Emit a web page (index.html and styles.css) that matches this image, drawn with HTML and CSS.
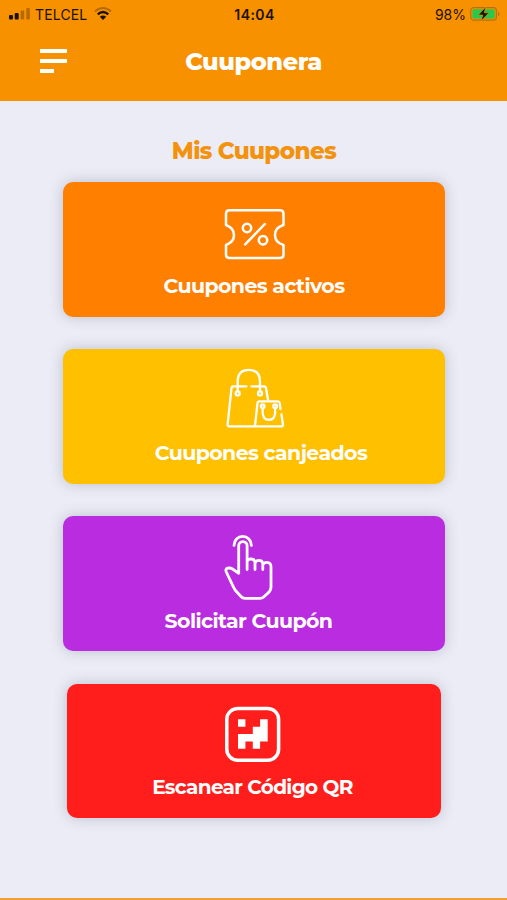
FILE: index.html
```html
<!DOCTYPE html>
<html lang="es">
<head>
    <meta charset="UTF-8">
    <meta name="viewport" content="width=device-width, initial-scale=1.0">
    <title>Cuuponera</title>
    <link rel="stylesheet" href="styles.css">
</head>
<body>
    <header class="header">
        <div class="status-bar">
            <div class="status-left">
                <svg class="signal" width="22" height="14" viewBox="0 0 22 14">
                    <rect x="0" y="8" width="4" height="4.5" rx="1"/>
                    <rect x="5.7" y="6" width="4" height="6.5" rx="1"/>
                    <rect class="dim" x="11.7" y="3.5" width="3.5" height="9" rx="1"/>
                    <rect class="dim" x="17.3" y="1" width="3.5" height="11.5" rx="1"/>
                </svg>
                <span class="carrier">TELCEL</span>
                <svg class="wifi" width="18" height="14" viewBox="0 0 18 14">
                    <path class="dim" d="M1 4.5Q9-2.5 17 4.5" fill="none" stroke="#1c1200" stroke-width="1.8"/>
                    <path d="M3.7 7.3Q9 2.7 14.3 7.3" fill="none" stroke="#1c1200" stroke-width="2.4"/>
                    <path d="M5.8 9.8Q9 7.2 12.2 9.8L9 13z"/>
                </svg>
            </div>
            <span class="time">14:04</span>
            <div class="status-right">
                <span class="percent">98%</span>
                <svg class="battery" width="30" height="16" viewBox="0 0 30 16">
                    <rect x=".8" y="1.6" width="25.6" height="12.6" rx="3" fill="none" stroke="#b57113" stroke-width="1.2"/>
                    <rect x="2.4" y="3.2" width="22.4" height="9.4" rx="1.6" fill="#27c84b"/>
                    <path d="M28 6v4q1.6-.7 1.6-2T28 6z" fill="#b57113"/>
                    <path d="M15.6 1L8.4 9h4.4l-1.6 6 7.6-8.2h-4.5z" stroke="#f89100" stroke-width=".6"/>
                </svg>
            </div>
        </div>
        <div class="nav-bar">
            <div class="menu">
                <span></span>
                <span></span>
                <span class="short"></span>
            </div>
            <h1>Cuuponera</h1>
        </div>
    </header>

    <main class="content">
        <h2>Mis Cuupones</h2>

        <a class="card activos">
            <svg class="icon" viewBox="0 0 80 76">
                <path d="M15.5 14.2H66Q69.5 14.2 69.5 17.7V29Q61 31.5 61 39T69.5 49V58.5Q69.5 62 66 62H15.5Q12 62 12 58.5V49Q20 46 20 39T12 29V17.7Q12 14.2 15.5 14.2Z"/>
                <circle cx="33" cy="32" r="4.2"/>
                <circle cx="49" cy="44.2" r="4.2"/>
                <path d="M50.8 28L31.2 48.4"/>
            </svg>
            <span class="label">Cuupones activos</span>
        </a>

        <a class="card canjeados">
            <svg class="icon bags" viewBox="0 0 80 76">
                <path d="M32.5 23.3H19.5Q17.7 23.3 17.5 25.2L13.6 61.5Q13.5 63.3 15.2 63.3H67.5Q69 63.3 69 61.8L67.5 51.5M37.5 23.3H50Q51.7 23.3 52 25L54 36.5"/>
                <path d="M23.7 28V18.5Q23.7 6.9 34.8 6.9T46 18.5V28"/>
                <path d="M41 62.8L43.5 40Q43.7 38.3 45.4 38.3H63.8Q65.4 38.3 65.7 40L66.4 46"/>
                <path d="M48.7 45V50Q49 56.8 54.9 56.8T61.1 50V45"/>
                <circle cx="23.7" cy="30.4" r="2"/>
                <circle cx="46" cy="30.4" r="2"/>
                <circle cx="48.7" cy="43.2" r="1.8"/>
                <circle cx="61.1" cy="43.2" r="1.8"/>
            </svg>
            <span class="label">Cuupones canjeados</span>
        </a>

        <a class="card solicitar">
            <svg class="icon hand" viewBox="0 0 80 76">
                <path d="M20 15.4A8.7 9 0 0 1 37.4 15.4"/>
                <path d="M24.7 43.3V15.8A4.2 4.2 0 0 1 33.1 15.8V39.5M33.1 31.5Q33.8 29 37 29Q41 29 41 33V39.5M41 33.5Q41.7 30.3 44.8 30.3Q48.8 30.3 48.8 34.3V39.5M48.8 35Q49.5 32.3 52.8 32.3Q57 32.3 57 37V57Q57 61 53.5 63.5L49.7 67Q48.2 68.3 46 68.3H31Q28.5 68.3 27 66.5L21.5 60.5Q20.3 59 19.6 57.3L12.3 42Q11 39 13.7 38.2Q16.2 37.5 18.5 39L24.7 43.3"/>
            </svg>
            <span class="label">Solicitar Cuupón</span>
        </a>

        <a class="card escanear">
            <svg class="icon" viewBox="0 0 80 76">
                <rect x="12.8" y="10.4" width="51.8" height="51.8" rx="11" stroke-width="3.5"/>
                <path class="pixels" d="M24 21.3h7.4v7.4H24zM46.1 21.3h7.6v22.1h-7.6v7.4h-7.3v-7.4h-7.4v7.4H24V36h14.8v-7.3h7.3z"/>
            </svg>
            <span class="label">Escanear Código QR</span>
        </a>
    </main>

    <footer class="bottom-bar"></footer>
</body>
</html>
```
FILE: styles.css
```css
* {
    box-sizing: border-box;
}
body {
    margin: 0;
    height: 900px;
    display: flex;
    flex-direction: column;
    background-color: #ebecf5;
    font-family: Montserrat, Inter, sans-serif;
    overflow: hidden;
}
.header {
    height: 101px;
    flex-shrink: 0;
    background-color: #f89100;
}
.status-bar {
    height: 28px;
    padding: 0 7px 0 9px;
    display: grid;
    grid-template-columns: 1fr auto 1fr;
    align-items: center;
    font-family: Inter, sans-serif;
    font-size: 14px;
    color: #1c1200;
}
.status-left,
.status-right {
    display: flex;
    align-items: center;
}
.status-right {
    justify-content: flex-end;
    gap: 4px;
}
.status-bar svg {
    fill: #1c1200;
}
.status-bar .dim {
    opacity: 0.3;
}
.carrier {
    margin: 0 7px 0 4px;
    letter-spacing: 0.15px;
}
.time {
    font-weight: 600;
    letter-spacing: 0.4px;
}
.nav-bar {
    height: 66px;
    display: grid;
    grid-template-columns: 1fr auto 1fr;
    align-items: center;
}
.menu {
    display: flex;
    flex-direction: column;
    gap: 6px;
    padding-left: 40px;
}
.menu span {
    width: 27px;
    height: 4px;
    background-color: #fff;
}
.menu .short {
    width: 14px;
}
h1 {
    margin: 0;
    padding-top: 1px;
    font-size: 24px;
    font-weight: 800;
    line-height: 30px;
    letter-spacing: -0.4px;
    color: #fff;
}
.content {
    flex: 1;
    display: flex;
    flex-direction: column;
    align-items: center;
    padding: 35px 0 0 1px;
}
h2 {
    margin: 0 0 16px;
    font-size: 23px;
    font-weight: 800;
    line-height: 30px;
    letter-spacing: -0.6px;
    color: #f3920d;
}
.card {
    width: 382px;
    height: 134.5px;
    margin-bottom: 32.7px;
    padding-top: 14px;
    display: flex;
    flex-direction: column;
    align-items: center;
    border-radius: 10px;
    box-shadow: 0 0 14px rgba(70, 75, 110, 0.28);
    color: #fff;
}
.icon {
    width: 80px;
    height: 76px;
    flex-shrink: 0;
    fill: none;
    stroke: #fff;
    stroke-width: 2.5;
    stroke-linecap: round;
    stroke-linejoin: round;
}
.bags {
    stroke-width: 2.3;
}
.pixels {
    fill: #fff;
    stroke: none;
}
.hand {
    stroke-width: 2.8;
}
.label {
    font-size: 20.5px;
    font-weight: 700;
    line-height: 28px;
    letter-spacing: -0.6px;
    white-space: nowrap;
}
.activos {
    background-color: #ff7f00;
}
.activos .label {
    margin-top: -0.5px;
}
.canjeados {
    background-color: #ffc000;
}
.canjeados .label {
    padding-left: 14px;
}
.solicitar {
    background-color: #b92ce0;
}
.solicitar .label {
    margin: 1px 0 0 -11px;
}
.escanear {
    width: 374px;
    background-color: #ff1e1c;
}
.escanear .label {
    margin: -1px 0 0 -3px;
    font-size: 20px;
    letter-spacing: -0.65px;
}
.bottom-bar {
    height: 2px;
    background-color: #f0a030;
}
```
